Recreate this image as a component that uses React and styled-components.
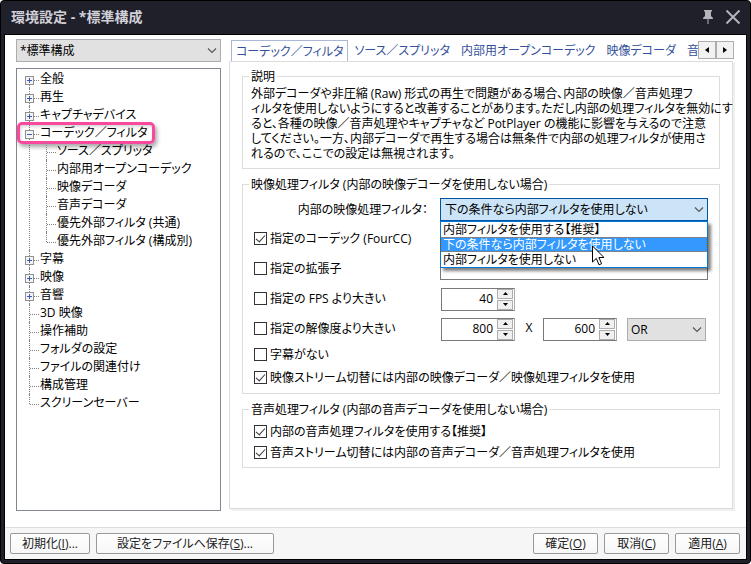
import React from "react";
import styled, { createGlobalStyle, css } from "styled-components";

const GlobalStyle = createGlobalStyle`
  *, *::before, *::after { box-sizing: border-box; }
  body { margin: 0; background: #fff; }
  body, button, input, select {
    font-family: "Open Sans", "Noto Sans CJK JP", sans-serif;
    font-size: 12px;
    line-height: 15px;
    font-feature-settings: "palt", "kern";
    font-kerning: normal;
    color: #000;
  }
  ul { list-style: none; margin: 0; padding: 0; }
`;

const Frame = styled.div`
  min-height: 100vh;
  display: flex;
  flex-direction: column;
  background: #20202a;
  border: 1px solid #000;
  border-radius: 4px;
  padding: 0 3px 3px;
`;

const TitleBar = styled.header`
  height: 33px;
  display: flex;
  align-items: center;
  gap: 12px;
  padding: 0 6px 2px 7px;
`;

const Title = styled.h1`
  flex: 1;
  margin: 0;
  font-size: 14px;
  line-height: 20px;
  font-weight: 700;
  color: #d0d0d8;
`;

const TitleButton = styled.button`
  display: flex;
  padding: 0;
  border: 0;
  background: none;
`;

const Body = styled.main`
  flex: 1;
  display: flex;
  flex-direction: column;
  background: #fff;
  border: 1px solid #000;
`;

const Columns = styled.div`
  flex: 1;
  display: flex;
  gap: 8px;
  padding: 4px 12px 16px 11px;
`;

const Sidebar = styled.div`
  width: 205px;
  flex: none;
  display: flex;
  flex-direction: column;
  gap: 6px;
`;

const SelectWrap = styled.div`
  position: relative;
  display: flex;
  flex: ${(p) => (p.$grow ? 1 : "none")};
`;

const SelectBox = styled.select`
  appearance: none;
  width: 100%;
  height: 23px;
  padding: 0 20px 0 ${(p) => (p.$open ? 4 : 3)}px;
  border: 1px solid ${(p) => (p.$open ? "#0054a0" : "#adadad")};
  border-radius: 0;
  background: ${(p) => (p.$open ? "#cce4f7" : "#e1e1e1")};
  outline: none;
`;

const SelectArrow = styled.svg`
  position: absolute;
  right: 4px;
  top: 8px;
  pointer-events: none;
`;

const Tree = styled.nav`
  flex: 1;
  border: 1px solid #828790;
  padding: 1px 0 0 8px;
`;

const Branch = styled.ul`
  padding-left: ${(p) => (p.$nested ? 17 : 0)}px;
`;

const Node = styled.li`
  position: relative;
  &::before {
    content: "";
    position: absolute;
    left: 4px;
    top: ${(p) => (p.$first ? 10 : 0)}px;
    ${(p) => (p.$last ? "height: 10px;" : "bottom: 0;")}
    border-left: 1px dotted #808080;
  }
`;

const NodeRow = styled.div`
  position: relative;
  height: 18px;
  display: flex;
  align-items: center;
  &::before {
    content: "";
    position: absolute;
    left: 5px;
    top: 10px;
    width: 9px;
    border-top: 1px dotted #808080;
  }
`;

const Expander = styled.button`
  position: relative;
  width: 9px;
  height: 9px;
  margin-top: 2px;
  padding: 0;
  display: flex;
  border: 0;
  background: #fff;
`;

const NodeLabel = styled.span`
  white-space: nowrap;
  padding-bottom: 1px;
  margin-left: ${(p) => (p.$leaf ? 15 : 6)}px;
`;

const Highlight = styled.span`
  position: absolute;
  left: -8px;
  top: -2px;
  width: 138px;
  height: 22px;
  border: 3px solid #f9499e;
  border-radius: 5px;
  box-shadow: 2px 3px 4px rgba(0, 0, 0, 0.35), inset 1px 2px 3px rgba(0, 0, 0, 0.15);
  pointer-events: none;
`;

const Content = styled.div`
  flex: 1;
  min-width: 0;
  display: flex;
  flex-direction: column;
`;

const TabStrip = styled.div`
  position: relative;
  height: 22px;
  display: flex;
  align-items: flex-end;
  gap: 1px;
  padding-left: 2px;
  overflow: hidden;
  flex: none;
`;

const Tab = styled.button`
  flex: none;
  height: 21px;
  padding: 0 4px 2px;
  white-space: nowrap;
  color: #34509b;
  background: #fff;
  border: 1px solid transparent;
  border-bottom: 0;
  ${(p) => p.$active && css`
    border-color: #aab8d6;
    padding-bottom: 0;
  `}
`;

const TabScroll = styled.div`
  position: absolute;
  right: 0;
  top: 2px;
  display: flex;
`;

const ScrollButton = styled.button`
  width: 18px;
  height: 18px;
  padding: 0;
  display: flex;
  align-items: center;
  justify-content: center;
  border: 1px solid #adadad;
  background: #f2f2f2;
`;

const Panel = styled.section`
  flex: 1;
  border: 1px solid #dcdcdc;
  box-shadow: 2px 2px 0 #f0f0f0;
  margin: 0 1px 2px 0;
  padding: 7px 12px 8px;
  display: flex;
  flex-direction: column;
  gap: 8px;
`;

const Group = styled.fieldset`
  margin: 0;
  min-width: 0;
  border: 1px solid #dcdcdc;
  padding: 0 6px;
`;

const Legend = styled.legend`
  padding: 0 2px;
  line-height: 15px;
`;

const GroupBody = styled.div`
  padding: 4px 5px;
`;

const Description = styled.p`
  margin: 0;
  padding: 2px 2px 7px;
  white-space: nowrap;
`;

const Row = styled.div`
  height: ${(p) => p.$height || 30}px;
  display: flex;
  align-items: center;
`;

const Check = styled.label`
  display: flex;
  align-items: center;
  gap: 3px;
  white-space: nowrap;
  width: ${(p) => (p.$fixed ? "186px" : "auto")};
  flex: none;
`;

const CheckBox = styled.input`
  appearance: none;
  flex: none;
  width: 13px;
  height: 13px;
  margin: 0;
  border: 1px solid #333;
  background: #fff;
  display: flex;
  justify-content: center;
  &:checked::after {
    content: "";
    width: 5px;
    height: 9px;
    border: solid #333;
    border-width: 0 1px 1px 0;
    transform: rotate(42deg);
  }
`;

const FieldLabel = styled.label`
  width: 186px;
  flex: none;
  padding-right: 12px;
  text-align: right;
  white-space: nowrap;
`;

const TextField = styled.input`
  flex: 1;
  min-width: 0;
  height: 24px;
  border: 1px solid #7a7a7a;
  padding: 0 3px;
`;

const Controls = styled.div`
  flex: 1;
  display: flex;
  align-items: center;
  padding: 2px 2px 0 1px;
`;

const SpinnerBox = styled.div`
  width: 74px;
  height: 23px;
  display: flex;
  border: 1px solid #7a7a7a;
  border-right-color: #adadad;
`;

const SpinnerInput = styled.input`
  flex: 1;
  min-width: 0;
  border: 0;
  padding: 0 4px 1px 0;
  text-align: right;
`;

const SpinnerButtons = styled.div`
  width: 17px;
  display: grid;
  grid-template-rows: 1fr 1fr;
  gap: 1px;
  padding: 0 1px 0 0;
`;

const SpinnerButton = styled.button`
  padding: 0;
  display: flex;
  align-items: center;
  justify-content: center;
  border: 1px solid #adadad;
  background: #f0f0f0;
`;

const Times = styled.span`
  width: 28px;
  text-align: center;
  padding-bottom: 3px;
`;

const Spacer = styled.span`
  width: 10px;
`;

const OptionList = styled.ul`
  position: absolute;
  z-index: 2;
  left: 0;
  right: 0;
  top: 23px;
  border: 1px solid #0078d7;
  background: #fff;
  box-shadow: 3px 3px 3px rgba(0, 0, 0, 0.5);
`;

const Option = styled.li`
  height: 15px;
  padding-left: 2px;
  line-height: 15px;
  white-space: nowrap;
  ${(p) => p.$active && css`
    background: #3399ff;
    color: #fff;
    outline: 1px dotted #c66a1c;
    outline-offset: -1px;
  `}
`;

const Pointer = styled.svg`
  position: absolute;
  z-index: 3;
  left: 152px;
  top: 47px;
`;

const Footer = styled.footer`
  border-top: 1px solid #dcdcdc;
  background: #f6f6f6;
  padding: 5px 6px 5px 5px;
  display: flex;
  gap: 6px;
`;

const FooterButton = styled.button`
  width: ${(p) => p.$width || 65}px;
  height: 21px;
  padding: 0;
  white-space: nowrap;
  color: #222;
  border: 1px solid #999;
  border-radius: 2px;
  background: linear-gradient(#fff, #f6f6f6);
`;

const Push = styled.div`
  flex: 1;
`;

const treeData = [
  { name: "全般", open: false },
  { name: "再生", open: false },
  { name: "キャプチャデバイス", open: false },
  {
    name: "コーデック／フィルタ",
    open: true,
    marked: true,
    children: [
      { name: "ソース／スプリッタ" },
      { name: "内部用オープンコーデック" },
      { name: "映像デコーダ" },
      { name: "音声デコーダ" },
      { name: "優先外部フィルタ (共通)" },
      { name: "優先外部フィルタ (構成別)" },
    ],
  },
  { name: "字幕", open: false },
  { name: "映像", open: false },
  { name: "音響", open: false },
  { name: "3D 映像" },
  { name: "操作補助" },
  { name: "フォルダの設定" },
  { name: "ファイルの関連付け" },
  { name: "構成管理" },
  { name: "スクリーンセーバー" },
];

const tabs = ["コーデック／フィルタ", "ソース／スプリッタ", "内部用オープンコーデック", "映像デコーダ", "音声デコーダ"];

const filterOptions = ["内部フィルタを使用する【推奨】", "下の条件なら内部フィルタを使用しない", "内部フィルタを使用しない"];

function TreeBranch({ items, nested }) {
  return (
    <Branch $nested={nested}>
      {items.map((item, i) => {
        const expandable = item.open !== undefined;
        return (
          <Node key={item.name} $first={i === 0 && !nested} $last={i === items.length - 1}>
            <NodeRow>
              {expandable && (
                <Expander aria-label={item.name} aria-expanded={item.open}>
                  <svg width="9" height="9" viewBox="0 0 9 9" shapeRendering="crispEdges">
                    <rect x="0.5" y="0.5" width="8" height="8" fill="#f4f4f4" stroke="#919191" />
                    <path d={item.open ? "M2 4.5h5" : "M2 4.5h5M4.5 2v5"} stroke="#3b5bb5" />
                  </svg>
                </Expander>
              )}
              <NodeLabel $leaf={!expandable}>{item.name}</NodeLabel>
              {item.marked && <Highlight />}
            </NodeRow>
            {item.children && <TreeBranch items={item.children} nested />}
          </Node>
        );
      })}
    </Branch>
  );
}

function Chevron() {
  return (
    <SelectArrow width="10" height="7" viewBox="0 0 10 7">
      <path d="M1 1.5l4 4 4-4" fill="none" stroke="#555" strokeWidth="1.1" />
    </SelectArrow>
  );
}

function Spinner({ label, value }) {
  return (
    <SpinnerBox>
      <SpinnerInput aria-label={label} defaultValue={value} />
      <SpinnerButtons>
        <SpinnerButton aria-label={`${label} +`}>
          <svg width="5" height="3" viewBox="0 0 5 3"><path d="M0 3l2.5-3L5 3z" /></svg>
        </SpinnerButton>
        <SpinnerButton aria-label={`${label} -`}>
          <svg width="5" height="3" viewBox="0 0 5 3"><path d="M0 0l2.5 3L5 0z" /></svg>
        </SpinnerButton>
      </SpinnerButtons>
    </SpinnerBox>
  );
}

function CheckItem({ label, checked, fixed }) {
  return (
    <Check $fixed={fixed}>
      <CheckBox type="checkbox" defaultChecked={checked} />
      {label}
    </Check>
  );
}

export default function App() {
  return (
    <Frame>
      <GlobalStyle />
      <TitleBar>
        <Title>環境設定 - *標準構成</Title>
        <TitleButton aria-label="Pin">
          <svg width="10" height="14" viewBox="0 0 10 14" fill="#b4b4ba">
            <path d="M1 0h8v1.5H8V6l2 2v1H5.500v5h-1V9H0V8l2-2V1.500H1z" />
          </svg>
        </TitleButton>
        <TitleButton aria-label="Close">
          <svg width="16" height="14" viewBox="0 0 16 14">
            <path d="M1.500 0.500l13 13M14.500 0.500l-13 13" stroke="#b4b4ba" strokeWidth="2" />
          </svg>
        </TitleButton>
      </TitleBar>
      <Body>
        <Columns>
          <Sidebar>
            <SelectWrap>
              <SelectBox aria-label="構成"><option>*標準構成</option></SelectBox>
              <Chevron />
            </SelectWrap>
            <Tree><TreeBranch items={treeData} /></Tree>
          </Sidebar>
          <Content>
            <TabStrip role="tablist">
              {tabs.map((name, i) => (
                <Tab key={name} role="tab" aria-selected={i === 0} $active={i === 0}>{name}</Tab>
              ))}
              <TabScroll>
                <ScrollButton aria-label="←">
                  <svg width="4" height="6" viewBox="0 0 4 6"><path d="M4 0v6L0 3z" /></svg>
                </ScrollButton>
                <ScrollButton aria-label="→">
                  <svg width="4" height="6" viewBox="0 0 4 6"><path d="M0 0v6l4-3z" /></svg>
                </ScrollButton>
              </TabScroll>
            </TabStrip>
            <Panel>
              <Group>
                <Legend>説明</Legend>
                <Description>
                  外部デコーダや非圧縮 (Raw) 形式の再生で問題がある場合、内部の映像／音声処理フ<br />
                  ィルタを使用しないようにすると改善することがあります。ただし内部の処理フィルタを無効にす<br />
                  ると、各種の映像／音声処理やキャプチャなど PotPlayer の機能に影響を与えるので注意<br />
                  してください。一方、内部デコーダで再生する場合は無条件で内部の処理フィルタが使用さ<br />
                  れるので、ここでの設定は無視されます。
                </Description>
              </Group>
              <Group>
                <Legend>映像処理フィルタ (内部の映像デコーダを使用しない場合)</Legend>
                <GroupBody>
                  <Row $height={27}>
                    <FieldLabel htmlFor="video-filter">内部の映像処理フィルタ：</FieldLabel>
                    <SelectWrap $grow>
                      <SelectBox id="video-filter" $open defaultValue={filterOptions[1]}>
                        {filterOptions.map((o) => <option key={o}>{o}</option>)}
                      </SelectBox>
                      <Chevron />
                      <OptionList role="listbox" aria-label="内部の映像処理フィルタ">
                        {filterOptions.map((o, i) => (
                          <Option key={o} role="option" aria-selected={i === 1} $active={i === 1}>{o}</Option>
                        ))}
                      </OptionList>
                      <Pointer width="13" height="21" viewBox="0 0 13 21">
                        <path d="M0.500 1v16l3.800-3.600 2.700 6.400 2.600-1.100-2.700-6.200h5.100z" fill="#fff" stroke="#000" />
                      </Pointer>
                    </SelectWrap>
                  </Row>
                  <Row><CheckItem fixed checked label="指定のコーデック (FourCC)" /><TextField aria-label="FourCC" /></Row>
                  <Row><CheckItem fixed label="指定の拡張子" /><TextField aria-label="拡張子" /></Row>
                  <Row>
                    <CheckItem fixed label="指定の FPS より大きい" />
                    <Controls><Spinner label="FPS" value="40" /></Controls>
                  </Row>
                  <Row>
                    <CheckItem fixed label="指定の解像度より大きい" />
                    <Controls>
                      <Spinner label="幅" value="800" />
                      <Times>X</Times>
                      <Spinner label="高さ" value="600" />
                      <Spacer />
                      <SelectWrap $grow>
                        <SelectBox aria-label="条件"><option>OR</option></SelectBox>
                        <Chevron />
                      </SelectWrap>
                    </Controls>
                  </Row>
                  <Row $height={22}><CheckItem label="字幕がない" /></Row>
                  <Row $height={24}><CheckItem checked label="映像ストリーム切替には内部の映像デコーダ／映像処理フィルタを使用" /></Row>
                </GroupBody>
              </Group>
              <Group>
                <Legend>音声処理フィルタ (内部の音声デコーダを使用しない場合)</Legend>
                <GroupBody>
                  <Row $height={21}><CheckItem checked label="内部の音声処理フィルタを使用する【推奨】" /></Row>
                  <Row $height={21}><CheckItem checked label="音声ストリーム切替には内部の音声デコーダ／音声処理フィルタを使用" /></Row>
                </GroupBody>
              </Group>
            </Panel>
          </Content>
        </Columns>
        <Footer>
          <FooterButton $width={80}>初期化(<u>I</u>)...</FooterButton>
          <FooterButton $width={178}>設定をファイルへ保存(<u>S</u>)...</FooterButton>
          <Push />
          <FooterButton>確定(<u>O</u>)</FooterButton>
          <FooterButton>取消(<u>C</u>)</FooterButton>
          <FooterButton>適用(<u>A</u>)</FooterButton>
        </Footer>
      </Body>
    </Frame>
  );
}
